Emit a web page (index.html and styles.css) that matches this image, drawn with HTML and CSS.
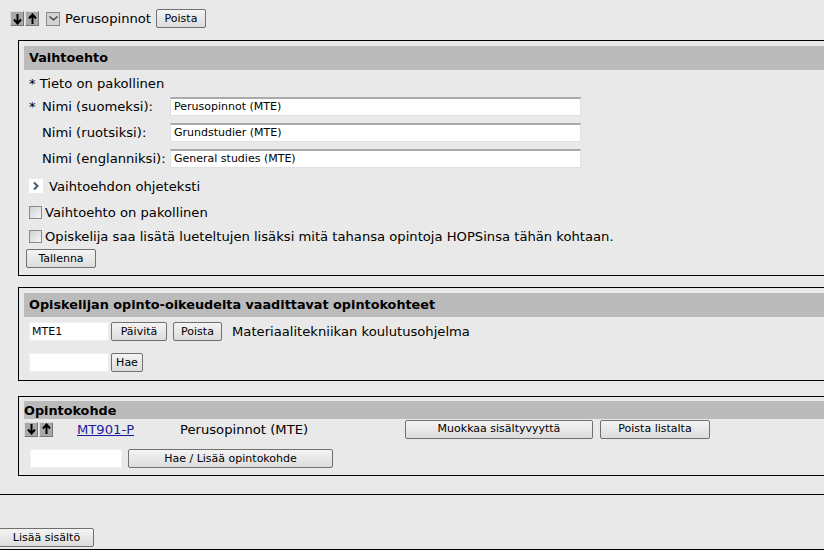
FILE: index.html
```html
<!DOCTYPE html>
<html>
<head>
<meta charset="utf-8">
<link rel="stylesheet" href="styles.css">
</head>
<body>
<div class="item">
  <div class="toprow">
    <span class="arrow"><svg width="11" height="12" viewBox="0 0 11 12"><path d="M5.5 1v9M2 6.5l3.5 4 3.5-4" stroke="#000" stroke-width="2" fill="none"/></svg></span><span class="arrow"><svg width="11" height="12" viewBox="0 0 11 12"><path d="M5.5 11V2M2 5.5l3.5-4 3.5 4" stroke="#000" stroke-width="2" fill="none"/></svg></span>
    <span class="chev"><svg width="11" height="11" viewBox="0 0 11 11"><path d="M1.5 3.5l4 3.5 4-3.5" stroke="#333" stroke-width="1.2" fill="none"/></svg></span>
    <span class="title">Perusopinnot</span>
    <button class="btn btn-poista">Poista</button>
  </div>

  <div class="box box1">
    <div class="band">Vaihtoehto</div>
    <div class="note">* Tieto on pakollinen</div>
    <div class="frow"><span class="lbl"><span class="ast">*</span>Nimi (suomeksi):</span><input class="txt" value="Perusopinnot (MTE)"></div>
    <div class="frow"><span class="lbl ind">Nimi (ruotsiksi):</span><input class="txt" value="Grundstudier (MTE)"></div>
    <div class="frow"><span class="lbl ind">Nimi (englanniksi):</span><input class="txt" value="General studies (MTE)"></div>
    <div class="expander"><span class="exp-ic"><svg width="8" height="10" viewBox="0 0 8 10"><path d="M2 1.5l3.5 3.5L2 8.5" stroke="#4a5a7a" stroke-width="2" fill="none"/></svg></span><span>Vaihtoehdon ohjeteksti</span></div>
    <label class="chk"><span class="cb"></span>Vaihtoehto on pakollinen</label>
    <label class="chk chk2"><span class="cb"></span>Opiskelija saa lisätä lueteltujen lisäksi mitä tahansa opintoja HOPSinsa tähän kohtaan.</label>
    <button class="btn btn-tallenna">Tallenna</button>
  </div>

  <div class="box box2">
    <div class="band">Opiskelijan opinto-oikeudelta vaadittavat opintokohteet</div>
    <div class="r2">
      <input class="sm" value="MTE1"><button class="btn b-paivita">Päivitä</button><button class="btn b-poista2">Poista</button><span class="r2text">Materiaalitekniikan koulutusohjelma</span>
    </div>
    <div class="r3">
      <input class="sm" value=""><button class="btn b-hae">Hae</button>
    </div>
  </div>

  <div class="box box3">
    <div class="band band3">Opintokohde</div>
    <div class="r4">
      <span class="arrows3"><span class="arrow"><svg width="11" height="12" viewBox="0 0 11 12"><path d="M5.5 1v9M2 6.5l3.5 4 3.5-4" stroke="#000" stroke-width="2" fill="none"/></svg></span><span class="arrow"><svg width="11" height="12" viewBox="0 0 11 12"><path d="M5.5 11V2M2 5.5l3.5-4 3.5 4" stroke="#000" stroke-width="2" fill="none"/></svg></span></span>
      <a class="code" href="#">MT901-P</a>
      <span class="name">Perusopinnot (MTE)</span>
      <button class="btn b-muokkaa">Muokkaa sisältyvyyttä</button>
      <button class="btn b-poistal">Poista listalta</button>
    </div>
    <div class="r5">
      <input class="sm2" value=""><button class="btn b-haelisaa">Hae / Lisää opintokohde</button>
    </div>
  </div>
</div>
<div class="footer">
  <button class="btn b-lisaa">Lisää sisältö</button>
</div>
</body>
</html>
```

FILE: styles.css
```css
html, body {
  margin: 0;
  padding: 0;
  overflow: hidden;
  background: #e9e9e9;
}
body {
  font-family: "DejaVu Sans", Verdana, sans-serif;
  font-size: 13.15px;
  color: #000;
  width: 824px;
  height: 550px;
}
.item {
  border-bottom: 1px solid #000;
  height: 495px;
  box-sizing: border-box;
  padding-top: 9px;
}
.toprow {
  display: flex;
  align-items: center;
  padding-left: 10px;
  height: 19px;
}
.arrow {
  display: inline-flex;
  align-items: center;
  justify-content: center;
  width: 12px;
  height: 13px;
  background: #a8a8a8;
  border: 1px solid #777;
  border-top-color: #ddd;
  border-left-color: #ddd;
  margin-right: 1px;
}
.chev {
  display: inline-flex;
  align-items: center;
  justify-content: center;
  width: 12px;
  height: 12px;
  background: #d4d4d4;
  border: 1px solid #888;
  margin-left: 6px;
}
.title {
  margin-left: 5px;
}
.btn {
  font-family: "DejaVu Sans", Tahoma, sans-serif;
  font-size: 11px;
  height: 19px;
  padding: 0 6px;
  border: 1px solid #707070;
  border-radius: 2px;
  background: linear-gradient(#f4f4f4, #dcdcdc);
  color: #000;
  box-sizing: border-box;
  line-height: 16px;
}
.btn-poista {
  margin-left: 5px;
  width: 50px;
}
.box {
  border: 1px solid #000;
  border-right: none;
  margin-left: 18px;
  width: 830px;
  padding: 5px 0 0 5px;
  box-sizing: border-box;
}
.box1 {
  margin-top: 12px;
  height: 236px;
}
.band {
  background: #bbbbbb;
  font-weight: bold;
  font-size: 12.8px;
  height: 24px;
  line-height: 24px;
  padding-left: 5px;
}
.note {
  padding-left: 5px;
  margin-top: 5px;
  height: 18px;
  line-height: 18px;
}
.frow {
  display: flex;
  align-items: center;
  padding-left: 5px;
  height: 26px;
}
.lbl {
  width: 141px;
  flex: none;
}
.ast {
  display: inline-block;
  width: 13px;
}
.ind {
  padding-left: 13px;
  width: 128px;
}
.txt {
  width: 411px;
  height: 19px;
  box-sizing: border-box;
  border: 1px solid #e0e0e0;
  border-top: 2px solid #aaa;
  background: #fff;
  font-family: "DejaVu Sans", Tahoma, sans-serif;
  font-size: 11px;
  padding: 0 3px;
  margin: 0;
}
.expander {
  display: flex;
  align-items: center;
  padding-left: 5px;
  margin-top: 2px;
  height: 26px;
}
.exp-ic {
  display: inline-flex;
  align-items: center;
  justify-content: center;
  width: 14px;
  height: 14px;
  background: #fff;
  margin-right: 6px;
}
.chk {
  display: flex;
  align-items: center;
  padding-left: 5px;
  height: 18px;
  margin-top: 4px;
}
.chk2 {
  margin-top: 6px;
}
.cb {
  width: 11px;
  height: 11px;
  border: 1px solid #888;
  background: linear-gradient(135deg, #d0d0d0, #f6f6f6);
  margin-right: 3px;
  flex: none;
}
.btn-tallenna {
  margin-top: 4px;
  margin-left: 2px;
  width: 70px;
}
.box2 {
  margin-top: 11px;
  height: 94px;
}
.r2 {
  display: flex;
  align-items: center;
  padding-left: 5px;
  margin-top: 5px;
  height: 19px;
}
.sm, .sm2 {
  width: 80px;
  height: 19px;
  box-sizing: border-box;
  border: 1px solid #f0f0f0;
  background: #fff;
  font-family: "DejaVu Sans", Tahoma, sans-serif;
  font-size: 11px;
  padding: 0 2px;
  margin: 0;
}
.b-paivita {
  margin-left: 2px;
  width: 56px;
}
.b-poista2 {
  margin-left: 6px;
  width: 49px;
}
.r2text {
  margin-left: 10px;
}
.r3 {
  display: flex;
  align-items: center;
  padding-left: 5px;
  margin-top: 12px;
  height: 19px;
}
.b-hae {
  margin-left: 2px;
  width: 32px;
  padding: 0;
}
.box3 {
  margin-top: 15px;
  height: 80px;
  padding-top: 4px;
}
.band3 {
  height: 18px;
  line-height: 20px;
  padding-left: 0;
}
.r4 {
  display: flex;
  align-items: center;
  height: 20px;
}
.arrows3 {
  display: inline-flex;
  width: 53px;
}
.code {
  color: #1a1a9a;
  width: 103px;
}
.name {
  width: 225px;
}
.b-muokkaa {
  width: 188px;
}
.b-poistal {
  margin-left: 7px;
  width: 110px;
}
.r5 {
  display: flex;
  align-items: center;
  padding-left: 6px;
  margin-top: 10px;
  height: 19px;
}
.sm2 {
  width: 92px;
}
.b-haelisaa {
  margin-left: 6px;
  width: 205px;
}
.footer {
  height: 55px;
  border-bottom: 1px solid #000;
  box-sizing: border-box;
  padding-top: 33px;
}
.b-lisaa {
  margin-left: -1px;
  width: 95px;
}
```
